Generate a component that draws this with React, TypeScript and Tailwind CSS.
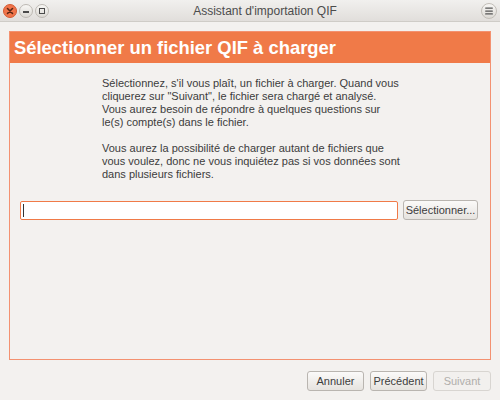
import { Menu } from "lucide-react";

const font = { fontFamily: '"Liberation Sans", Arial, sans-serif' };

function WindowButtons() {
  return (
    <div className="flex items-center gap-[2px] pl-[3px]">
      <div className="w-[14px] h-[14px] rounded-full bg-[#f0744a] border border-[#d45a32] flex items-center justify-center">
        <svg width="8" height="8" viewBox="0 0 8 8">
          <path d="M1.5 1.5 L6.5 6.5 M6.5 1.5 L1.5 6.5" stroke="#5a2614" strokeWidth="1.6" strokeLinecap="round" />
        </svg>
      </div>
      <div className="w-[14px] h-[14px] rounded-full bg-gradient-to-b from-[#f8f7f5] to-[#dcd9d4] border border-[#bdb9b3] flex items-center justify-center">
        <div className="w-[6px] h-[2px] bg-[#4a4a4a] mt-[3px]" />
      </div>
      <div className="w-[14px] h-[14px] rounded-full bg-gradient-to-b from-[#f8f7f5] to-[#dcd9d4] border border-[#bdb9b3] flex items-center justify-center">
        <div className="w-[6px] h-[6px] border-[1.5px] border-[#4a4a4a]" />
      </div>
    </div>
  );
}

function Button({ label, disabled, className = "" }: { label: string; disabled?: boolean; className?: string }) {
  return (
    <button
      disabled={disabled}
      className={
        (disabled
          ? "h-[20px] rounded-[3px] border border-[#d8d5d1] bg-[#f2f0ee] text-[#b0aeab] text-[11px] flex items-center justify-center "
          : "h-[20px] rounded-[3px] border border-[#b9b5b0] bg-gradient-to-b from-[#fbfaf9] to-[#e6e3df] text-[#3c3c3c] text-[11px] flex items-center justify-center ") +
        className
      }
    >
      {label}
    </button>
  );
}

export default function App() {
  return (
    <div style={font} className="w-[500px] h-[400px] bg-[#f3f1ef] flex flex-col overflow-hidden">
      {/* Title bar */}
      <div className="h-[22px] shrink-0 flex items-center justify-between bg-gradient-to-b from-[#f1f0ee] to-[#e1dedb] border-b border-[#cfccc7]">
        <WindowButtons />
        <span className="text-[12px] text-[#4c4c4c]">Assistant d'importation QIF</span>
        <div className="mr-[3px] w-[16px] h-[16px] rounded-full bg-gradient-to-b from-[#f8f7f5] to-[#dcd9d4] border border-[#c2beb8] flex items-center justify-center">
          <Menu size={10} strokeWidth={3} className="text-[#555]" />
        </div>
      </div>

      {/* Content */}
      <div className="flex-1 flex flex-col px-[9px] pt-[9px]">
        <div className="h-[329px] border border-[#f39170] flex flex-col">
          <div className="h-[31px] shrink-0 bg-[#f07a48] flex items-center pl-[4px]">
            <h1 className="text-[18.4px] font-bold text-white">Sélectionner un fichier QIF à charger</h1>
          </div>
          <div className="pl-[92px] pt-[14px] text-[11px] leading-[13px] text-[#3c3c3c] whitespace-nowrap">
            <p>
              Sélectionnez, s'il vous plaît, un fichier à charger. Quand vous
              <br />
              cliquerez sur "Suivant", le fichier sera chargé et analysé.
              <br />
              Vous aurez besoin de répondre à quelques questions sur
              <br />
              le(s) compte(s) dans le fichier.
            </p>
            <p className="mt-[13px]">
              Vous aurez la possibilité de charger autant de fichiers que
              <br />
              vous voulez, donc ne vous inquiétez pas si vos données sont
              <br />
              dans plusieurs fichiers.
            </p>
          </div>
          <div className="flex items-center gap-[5px] pl-[10px] mt-[19px]">
            <div className="w-[378px] h-[19px] bg-white border border-[#f07a48] rounded-[2px] flex items-center pl-[2px]">
              <div className="w-px h-[13px] bg-[#333]" />
            </div>
            <Button label="Sélectionner..." className="w-[75px]" />
          </div>
        </div>

        {/* Footer buttons */}
        <div className="flex justify-end gap-[6px] mt-[11px]">
          <Button label="Annuler" className="w-[57px]" />
          <Button label="Précédent" className="w-[57px]" />
          <Button label="Suivant" disabled className="w-[58px]" />
        </div>
      </div>
    </div>
  );
}
